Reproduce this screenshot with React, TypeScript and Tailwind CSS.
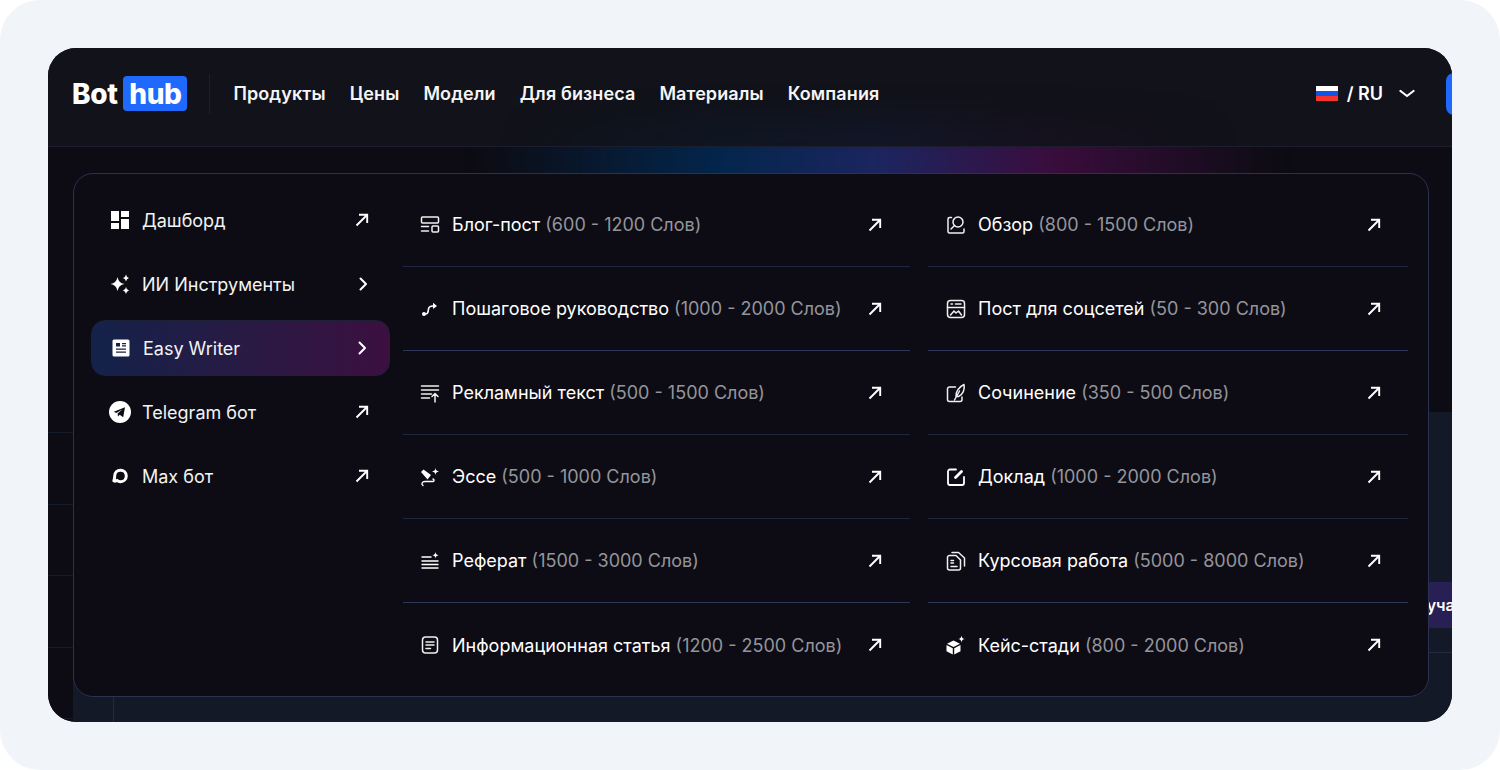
import type { ReactNode } from "react";

const font = "font-['Inter','Liberation_Sans',sans-serif]";

function Ico({ children, className = "h-5 w-5" }: { children: ReactNode; className?: string }) {
  return (
    <svg viewBox="0 0 20 20" fill="none" stroke="currentColor" strokeWidth="1.5" strokeLinecap="round" strokeLinejoin="round" className={className} aria-hidden="true">
      {children}
    </svg>
  );
}

function ArrowUp() {
  return (
    <svg viewBox="0 0 14 14" fill="none" stroke="currentColor" strokeWidth="1.9" className="h-[14px] w-[14px] text-white" aria-hidden="true">
      <path d="M1.5 12.5 12 2M4 1.8h8.2V10" />
    </svg>
  );
}

function Chevron() {
  return (
    <svg viewBox="0 0 14 14" fill="none" stroke="currentColor" strokeWidth="2" strokeLinecap="round" strokeLinejoin="round" className="h-[14px] w-[14px] text-white" aria-hidden="true">
      <path d="M5.500 1.500 11 7l-5.500 5.500" />
    </svg>
  );
}

const sideItems = [
  {
    label: "Дашборд",
    trail: "arrow",
    icon: (
      <svg viewBox="0 0 20 20" className="h-5 w-5 fill-white" aria-hidden="true">
        <path d="M1 1h8v10H1zM1 13h8v6H1zM11 1h8v6h-8zM11 9h8v10h-8z" />
      </svg>
    ),
  },
  {
    label: "ИИ Инструменты",
    trail: "chevron",
    icon: (
      <svg viewBox="0 0 22 22" className="h-[22px] w-[22px] fill-white" aria-hidden="true">
        <path d="M8.500 4Q9.500 10 15.500 11 9.500 12 8.500 18 7.500 12 1.500 11 7.500 10 8.500 4zM17 1.500Q17.500 4.500 20 5 17.500 5.500 17 8.500 16.500 5.500 14 5 16.500 4.500 17 1.500zM17 14Q17.500 17 20 17.500 17.500 18 17 21 16.500 18 14 17.500 16.500 17 17 14z" />
      </svg>
    ),
  },
  {
    label: "Easy Writer",
    trail: "chevron",
    active: true,
    icon: (
      <svg viewBox="0 0 20 20" className="h-5 w-5" aria-hidden="true">
        <rect x="1.500" y="1.500" width="17" height="17" rx="1.500" fill="#fff" />
        <path d="M5 5h4v3.500H5zM11 5h4v1.300h-4zM11 7.300h4v1.200h-4zM5 10.500h10v1.300H5zM5 13.500h10v1.300H5z" fill="#1b2048" />
      </svg>
    ),
  },
  {
    label: "Telegram бот",
    trail: "arrow",
    icon: (
      <svg viewBox="0 0 22 22" className="h-[22px] w-[22px]" aria-hidden="true">
        <circle cx="11" cy="11" r="11" fill="#fff" />
        <path d="M4.800 10.800 16 6.300l-1.800 10-3.500-2.500-1.700 1.700-.4-3 5-4.300-6.300 3.800z" fill="#0d0c14" />
      </svg>
    ),
  },
  {
    label: "Max бот",
    trail: "arrow",
    icon: (
      <svg viewBox="0 0 20 20" className="h-5 w-5" aria-hidden="true">
        <path d="M10.500 4.200c-3.400 0-5.800 2.400-5.800 5.800 0 1.800-.3 3.500-.9 4.800.9.500 2.300.3 3.200-.4 1 .8 2.200 1.300 3.500 1.300 3.300 0 5.800-2.500 5.800-5.700s-2.500-5.800-5.800-5.800z" fill="none" stroke="#fff" strokeWidth="3" strokeLinejoin="round" />
      </svg>
    ),
  },
];

const writerItems: { icon: ReactNode; title: string; note: string; line?: string }[] = [
  {
    title: "Блог-пост",
    note: "(600 - 1200 Слов)",
    line: "border-[#1f2740]",
    icon: (
      <Ico>
        <rect x="1.500" y="2" width="17" height="6" rx="1" />
        <path d="M1.500 11.500h7M1.500 16h7" />
        <rect x="12" y="11" width="6.500" height="6" rx="1" />
      </Ico>
    ),
  },
  {
    title: "Обзор",
    note: "(800 - 1500 Слов)",
    line: "border-[#1f2740]",
    icon: (
      <Ico>
        <path d="M5.500 2.500H3.500a1.500 1.500 0 0 0-1.500 1.500v12.500A1.500 1.500 0 0 0 3.500 18h13a1.500 1.500 0 0 0 1.500-1.500V14" />
        <circle cx="12" cy="7" r="5" />
        <path d="m8.500 10.500-3.500 3.500" />
      </Ico>
    ),
  },
  {
    title: "Пошаговое руководство",
    note: "(1000 - 2000 Слов)",
    line: "border-[#2d3759]",
    icon: (
      <svg viewBox="0 0 20 20" className="h-5 w-5 text-white" fill="none" stroke="currentColor" strokeWidth="1.600" aria-hidden="true">
        <circle cx="4" cy="15" r="2" fill="currentColor" stroke="none" />
        <path d="M5.500 15c3 0 2.500-2 3-5 .3-2 1.500-3 4.500-3" />
        <path d="M13 3.800 17 7 13 10z" fill="currentColor" stroke="none" />
      </svg>
    ),
  },
  {
    title: "Пост для соцсетей",
    note: "(50 - 300 Слов)",
    line: "border-[#2d3759]",
    icon: (
      <Ico>
        <rect x="1.500" y="1.500" width="17" height="17" rx="3" />
        <path d="M1.500 8.500h17M5 5h1.500M9.500 5h5.500" />
        <path d="m4.500 16 3.500-4 2 2 2.500-2 3 4" />
      </Ico>
    ),
  },
  {
    title: "Рекламный текст",
    note: "(500 - 1500 Слов)",
    line: "border-[#1f2740]",
    icon: (
      <Ico>
        <path d="M1.500 3h17M1.500 7h17M1.500 11h10M1.500 15h8" />
        <path d="M15 19v-8M12 13.500 15 10.500l3 3" />
      </Ico>
    ),
  },
  {
    title: "Сочинение",
    note: "(350 - 500 Слов)",
    line: "border-[#1f2740]",
    icon: (
      <Ico>
        <path d="M9.500 4H3.500a2 2 0 0 0-2 2v10.500a2 2 0 0 0 2 2H14a2 2 0 0 0 2-2V14" />
        <path d="M10 13.500C9.500 9.500 12.500 4 18 1.500c1 5-1 10-5.500 12zM8.500 17l5-9" />
      </Ico>
    ),
  },
  {
    title: "Эссе",
    note: "(500 - 1000 Слов)",
    line: "border-[#1f2740]",
    icon: (
      <svg viewBox="0 0 20 20" className="h-5 w-5 text-white" fill="currentColor" stroke="none" aria-hidden="true">
        <path d="m1 5 2.500-2.500L11 8l-3.500 4.500zM15.500 1c.3 2.200 1.200 3 3.500 3.500-2.300.5-3.200 1.300-3.500 3.500-.3-2.200-1.200-3-3.500-3.500 2.300-.5 3.200-1.300 3.500-3.500z" />
        <path d="M3 18.500c-2-1.500-1-4 2-4h7.500c1.800 0 2.200-1.700.5-2.500" fill="none" stroke="currentColor" strokeWidth="1.400" strokeLinecap="round" />
      </svg>
    ),
  },
  {
    title: "Доклад",
    note: "(1000 - 2000 Слов)",
    line: "border-[#1f2740]",
    icon: (
      <svg viewBox="0 0 20 20" className="h-5 w-5 text-white" fill="none" stroke="currentColor" strokeWidth="1.800" strokeLinecap="round" aria-hidden="true">
        <path d="M10 2.500H4a2 2 0 0 0-2 2V16a2 2 0 0 0 2 2h12a2 2 0 0 0 2-2v-6" />
        <path d="m9.500 10.500 6-6" strokeWidth="2.800" />
      </svg>
    ),
  },
  {
    title: "Реферат",
    note: "(1500 - 3000 Слов)",
    line: "border-[#2d3759]",
    icon: (
      <svg viewBox="0 0 20 20" className="h-5 w-5 text-white" fill="none" stroke="currentColor" strokeWidth="1.600" aria-hidden="true">
        <path d="M1.500 6h10M1.500 10h17M1.500 13.500h17M1.500 17h17" />
        <path d="M15.500 1c.3 2 1 2.800 3 3.300-2 .4-2.700 1.200-3 3.200-.3-2-1-2.800-3-3.200 2-.5 2.700-1.300 3-3.300z" fill="currentColor" stroke="none" />
      </svg>
    ),
  },
  {
    title: "Курсовая работа",
    note: "(5000 - 8000 Слов)",
    line: "border-[#2d3759]",
    icon: (
      <Ico>
        <path d="M3.500 4.500H10l4.500 4.500v8a2 2 0 0 1-2 2h-9a2 2 0 0 1-2-2v-10.500a2 2 0 0 1 2-2z" />
        <path d="M6 1.500h6.500L18.500 7v8" />
        <path d="M5 9.500h2.500M5 12h2.500M5 15.500h6" />
      </Ico>
    ),
  },
  {
    title: "Информационная статья",
    note: "(1200 - 2500 Слов)",
    icon: (
      <Ico>
        <rect x="2.500" y="2" width="15" height="16" rx="3" />
        <path d="M6 7h8M6 10h8M6 13.500h4.500" />
      </Ico>
    ),
  },
  {
    title: "Кейс-стади",
    note: "(800 - 2000 Слов)",
    icon: (
      <svg viewBox="0 0 20 20" className="h-5 w-5 text-white" aria-hidden="true">
        <path fill="#fff" d="m7.500 5.500 6.500 3.300-6.500 3.300-6.500-3.300zM.5 10l6.300 3.200V19.500L.5 16.300zM14.500 10v6.300l-6.300 3.200v-6.300zM15.500 .5c.3 2.300 1.200 3.200 3.500 3.500-2.300.3-3.200 1.200-3.500 3.500-.3-2.300-1.200-3.200-3.500-3.500 2.300-.3 3.200-1.200 3.500-3.500z" />
      </svg>
    ),
  },
];

const navLinks = ["Продукты", "Цены", "Модели", "Для бизнеса", "Материалы", "Компания"];

function Header() {
  return (
    <header className="relative flex h-[99px] shrink-0 items-center overflow-hidden border-b border-[#1c1e2e] bg-[#11121a] pb-[7px] pl-6">
      <div className="absolute left-[460px] top-[70px] h-[60px] w-[720px] bg-[linear-gradient(90deg,transparent,#0a2338_30%,#182048_52%,#241029_75%,transparent)] opacity-30 blur-lg" />
      <div className="relative flex items-center text-[28px] font-extrabold leading-none tracking-[-0.4px] text-white">
        <span>Bot</span>
        <span className="ml-[6px] flex h-[35px] w-[64px] items-center justify-center rounded-[4px] bg-[#1f69ff]">hub</span>
      </div>
      <div className="relative ml-[22px] h-10 w-px bg-[#1d2033]" />
      <nav className="relative ml-[23px] flex items-center gap-6 text-[18px] font-semibold tracking-[0.1px] text-[#f5f5f5]">
        {navLinks.map((link) => (
          <span key={link}>{link}</span>
        ))}
      </nav>
      <div className="relative ml-auto flex items-center">
        <span className="flex h-4 w-[22px] flex-col overflow-hidden">
          <span className="h-1/3 bg-white" />
          <span className="h-1/3 bg-[#0f55e8]" />
          <span className="h-1/3 bg-[#f5332f]" />
        </span>
        <span className="ml-[9px] text-[18px] font-semibold text-white">/ RU</span>
        <svg viewBox="0 0 16 10" fill="none" stroke="currentColor" strokeWidth="2.200" strokeLinecap="round" strokeLinejoin="round" className="ml-4 h-[10px] w-4 text-white" aria-hidden="true">
          <path d="M1.500 2l6.500 5 6.500-5" />
        </svg>
        <span className="ml-[31px] -mr-[34px] h-[42px] w-[40px] rounded-l-[8px] bg-[#1f69ff]" />
      </div>
    </header>
  );
}

function PageBehind() {
  return (
    <div className="flex min-h-0 flex-1 flex-col">
      <div className="relative h-[265px] shrink-0 overflow-hidden bg-[#0d0c14]">
        <div className="absolute -top-5 left-[430px] h-[120px] w-[800px] bg-[linear-gradient(90deg,transparent,#03264c_30%,#1c2560_50%,#3a0d3d_72%,transparent)] blur-md" />
      </div>
      <div className="flex min-h-0 flex-1">
        <aside className="w-[25px] shrink-0 bg-[#0d0c14] pt-[20px]">
          <div className="border-t border-[#161b2a]">
            {[0, 1, 2, 3].map((n) => (
              <div key={n} className="h-[71.500px] border-b border-[#161b2a]" />
            ))}
          </div>
        </aside>
        <div className="min-w-0 flex-1 bg-[#131926]">
          <div className="flex justify-end pt-[170px]">
            <span className="-mr-[28px] flex h-[46px] w-[178px] shrink-0 items-center justify-end bg-[#282054] pr-[8px] text-[16px] font-semibold text-white">Получать</span>
          </div>
          <div className="mt-6 ml-10 h-[72px] border-t border-l border-[#232a40]" />
        </div>
      </div>
    </div>
  );
}

function MegaMenu() {
  return (
    <div className="absolute left-[25px] top-[125px] flex h-[524px] w-[1356px] rounded-[20px] border border-[#2a3252] bg-[#0d0c14]">
      <div className="w-[329px] shrink-0 pl-[17px] pt-[18px]">
        {sideItems.map((item) => (
          <div key={item.label} className={`mb-2 flex h-[56px] w-[299px] items-center rounded-[14px] pl-[17px] pr-[21px] ${item.active ? "border border-[#1c2136] bg-[linear-gradient(90deg,#14224a,#2a1a44_55%,#3c1040)]" : ""}`}>
            <span className="flex w-[24px] shrink-0 items-center justify-center">{item.icon}</span>
            <span className="ml-[10px] flex-1 text-[18px] font-normal text-[#f3f3f3]">{item.label}</span>
            {item.trail === "arrow" ? <ArrowUp /> : <Chevron />}
          </div>
        ))}
      </div>
      <div className="grid h-fit flex-1 grid-cols-[507px_480px] gap-x-[18px] pt-[9px]">
        {writerItems.map((row, i) => (
          <div key={row.title} className={`flex h-[84px] items-center ${i % 2 ? "pl-[18px] pr-[27px]" : "pl-[17px] pr-[28px]"} ${row.line ? `border-b ${row.line}` : ""}`}>
            <span className="w-5 shrink-0 text-[#f0f0f0]">{row.icon}</span>
            <span className="ml-[12px] flex-1 text-[18px] font-normal text-white">
              {row.title} <span className="text-[#94959c]">{row.note}</span>
            </span>
            <ArrowUp />
          </div>
        ))}
      </div>
    </div>
  );
}

export default function App() {
  return (
    <div className={`h-[770px] w-[1500px] overflow-hidden bg-white ${font}`}>
      <div className="h-full w-full rounded-[40px] bg-[#f1f5fa] p-12">
        <div className="relative flex h-[674px] w-[1404px] flex-col overflow-hidden rounded-[28px] bg-[#0d0c14]">
          <Header />
          <PageBehind />
          <MegaMenu />
        </div>
      </div>
    </div>
  );
}
